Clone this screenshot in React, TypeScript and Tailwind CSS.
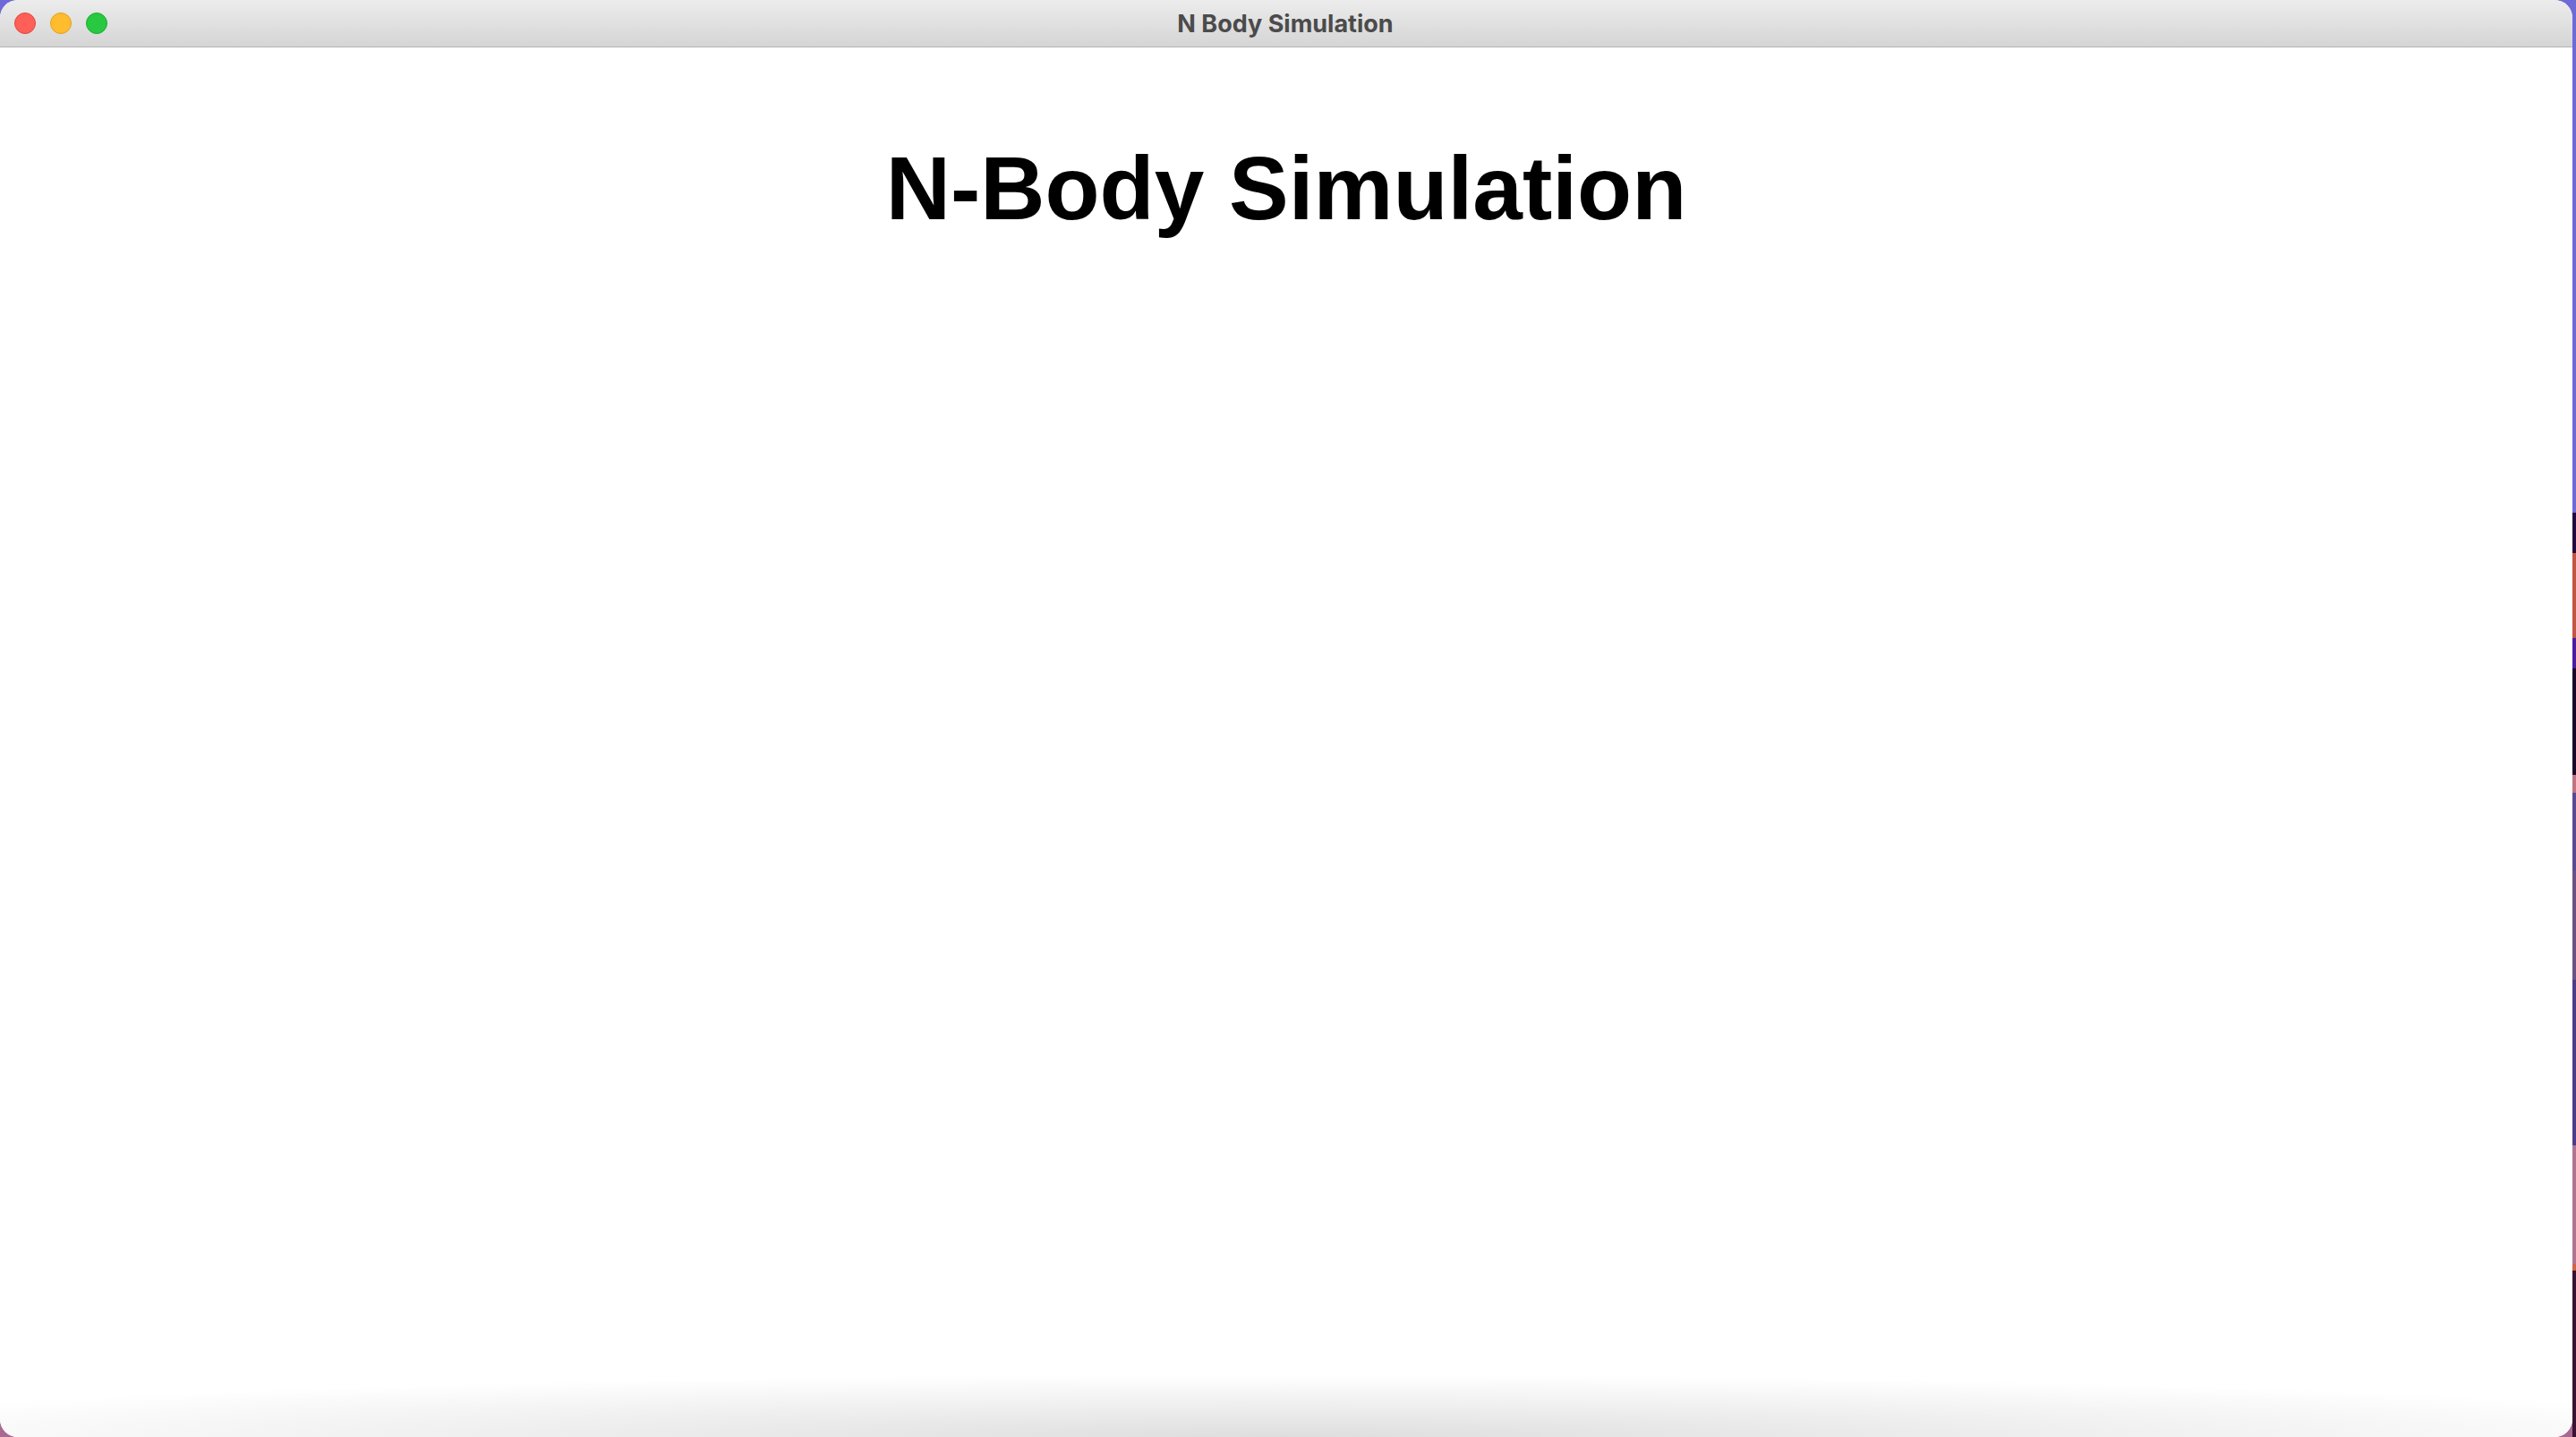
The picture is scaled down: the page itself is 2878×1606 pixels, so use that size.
import React from "react";

const strip = [
  { h: 573, c: "#6e6ad6" },
  { h: 45, c: "#220a3e" },
  { h: 95, c: "#c25543" },
  { h: 34, c: "#4b1c9e" },
  { h: 119, c: "#1a0628" },
  { h: 20, c: "#c07383" },
  { h: 87, c: "#5a4a92" },
  { h: 122, c: "#6a5284" },
  { h: 185, c: "#4c3c8a" },
  { h: 133, c: "#b07392" },
  { h: 7, c: "#d0653f" },
  { h: 186, c: "#3a1232" },
];

export default function App() {
  return (
    <div className="w-[2878px] h-[1606px] flex overflow-hidden bg-[linear-gradient(to_bottom,#6e6ad6_0%,#6e6ad6_50%,#a86a92_80%,#a86a92_100%)]">
      <div className="w-[2874px] h-full flex flex-col bg-white rounded-[20px] overflow-hidden">
        <div className="h-[53px] shrink-0 flex items-center relative border-b border-[#b4b4b4] bg-[linear-gradient(to_bottom,#ececec,#d5d5d5)]">
          <div className="flex items-center gap-[16px] pl-[16px]">
            <div className="w-[24px] h-[24px] rounded-full bg-[#fe5f57] border border-[#e14640]" />
            <div className="w-[24px] h-[24px] rounded-full bg-[#febc2e] border border-[#dfa123]" />
            <div className="w-[24px] h-[24px] rounded-full bg-[#28c840] border border-[#1dad2b]" />
          </div>
          <div className="flex-1 flex justify-center pr-[122px]">
            <span className="text-[27px] font-bold text-[#4b4b4b] leading-none" style={{ fontFamily: "Inter, 'Noto Sans', sans-serif" }}>
              N Body Simulation
            </span>
          </div>
        </div>
        <div className="flex-1 flex flex-col items-center pt-[107px]">
          <h1 className="text-[100px] font-bold leading-none text-black" style={{ fontFamily: "'Liberation Sans', Arial, sans-serif" }}>
            N-Body Simulation
          </h1>
        </div>
        <div className="h-[70px] shrink-0 bg-[radial-gradient(ellipse_60%_100%_at_50%_100%,#dedede_0%,#f2f2f2_60%,#ffffff_100%)]" />
      </div>
      <div className="flex-1 flex flex-col">
        {strip.map((s, i) => (
          <div key={i} className="w-full shrink-0" style={{ height: s.h, background: s.c }} />
        ))}
      </div>
    </div>
  );
}
